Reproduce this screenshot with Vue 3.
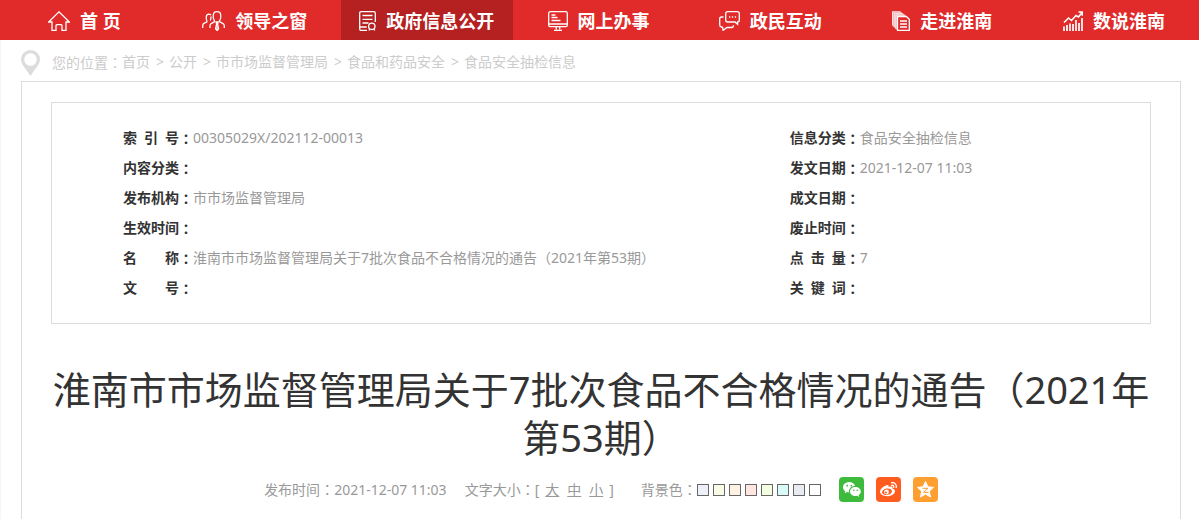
<script setup>
const navItems = [
  { label: '首 页', icon: 'home', w: 22 },
  { label: '领导之窗', icon: 'people', w: 23 },
  { label: '政府信息公开', icon: 'doc', w: 17, active: true },
  { label: '网上办事', icon: 'screen', w: 20 },
  { label: '政民互动', icon: 'chat', w: 21 },
  { label: '走进淮南', icon: 'papers', w: 18 },
  { label: '数说淮南', icon: 'chart', w: 20 },
]
const crumbs = ['首页', '公开', '市市场监督管理局', '食品和药品安全', '食品安全抽检信息']
const rows = [
  [['索', '引', '号'], '00305029X/202112-00013', [...'信息分类'], '食品安全抽检信息'],
  [[...'内容分类'], '', [...'发文日期'], '2021-12-07 11:03'],
  [[...'发布机构'], '市市场监督管理局', [...'成文日期'], ''],
  [[...'生效时间'], '', [...'废止时间'], ''],
  [['名', '称'], '淮南市市场监督管理局关于7批次食品不合格情况的通告（2021年第53期）', ['点', '击', '量'], '7'],
  [['文', '号'], '', ['关', '键', '词'], ''],
]
const sizes = ['大', '中', '小']
const swatches = ['#eef0f8', '#fafbe6', '#fff2e2', '#ffe6e1', '#f3ffe1', '#dafafa', '#e9ebf3', '#ffffff']
</script>

<template>
  <div class="page">
    <nav class="nav">
      <ul class="nav-list">
        <li v-for="n in navItems" :key="n.icon" class="nav-item" :class="{ active: n.active }">
          <a href="#">
            <svg :width="n.w" height="20" :viewBox="`0 0 ${n.w} 20`" class="nav-icon" aria-hidden="true">
              <g v-if="n.icon === 'home'">
                <path d="M.7 11 11 .9 21.3 11H18v8.3h-4v-4.6q0-1-1-1H9q-1 0-1 1v4.6H4V11z" />
              </g>
              <g v-else-if="n.icon === 'people'">
                <path d="M.7 17v-2q0-2 1.600-2.800L4.800 11V9.500C4.200 8.500 4.200 6.800 4.300 5.700 4.500 4 5.500 3.200 7 3.200q1.200 0 2 .7M8 17v-2.500q0-1.500 1.500-2.200l2.800-1.400V9.500C11 8 11 5.500 11.300 3.500 11.600 1.600 13 .7 15 .7s3.400.9 3.700 2.800c.3 2 .3 4.500-1 6v1.400l3 1.400q1.600.8 1.600 2.400V17M9 5.500C9 7.500 9 8.700 8.200 9.700" />
                <path d="M14 11h2.200l-.6 2 1 4.800-1.500 1.700-1.500-1.700 1-4.800z" fill="#fff" fill-opacity=".6" />
              </g>
              <g v-else-if="n.icon === 'doc'">
                <path d="M8 19.300H2.200Q.7 19.300.7 17.800V2.200Q.7.7 2.200.7h12.600q1.500 0 1.500 1.500V11M.7 16h7M3.500 4.500h10M3.500 8.300h10M3.500 12h6" />
                <circle cx="12.800" cy="15.300" r="3.200" /><path d="m10.800 18-1 1.500M14.800 18l1 1.500" />
              </g>
              <g v-else-if="n.icon === 'screen'">
                <rect x=".7" y=".7" width="18.600" height="15" rx="1.500" />
                <path d="M.7 13h18.600M3.500 4h4M3.500 6.500h6M3.500 9.500h9M8.300 16v2.500M11.700 16v2.500M6 19.300h8" />
              </g>
              <g v-else-if="n.icon === 'chat'">
                <path d="M8.700.7h9.600q2 0 2 2V9q0 2-1.700 2v2.300L16 11H8.700q-2 0-2-2V2.700q0-2 2-2z" />
                <path d="M4.500 6h-2Q.7 6 .7 8v5.500q0 2 1.500 2.500l1.400.3.500 3L8 16.500h4.500q2 0 2-2.300" />
                <path d="M10 6h1.300M12.900 6h1.300M15.800 6h1.300" />
              </g>
              <g v-else-if="n.icon === 'papers'">
                <path class="pale" d="M0 .5h8.500L12 3l3 2.500H5V19L0 14.500z" />
                <path class="thin" d="M.5 14V.7h8M2.200 16V2.400h8.300M3.800 18V4h8.700" />
                <path class="sheet" d="M5.500 5.500h8.800l3 2.800v11H5.500zM8 10h7M8 13h7M8 16h7" />
              </g>
              <g v-else>
                <path class="trend" d="m1 11.500 4.500-4.500 3 2.500L13 4.500l2.500 1.500 3.500-4.500M15.500 1h3.800v3.800" />
                <path class="bars" d="M1 20v-4.500M4 20v-6M7 20v-7.500M10 20v-7M13 20V9M16 20v-8M19 20V7" />
              </g>
            </svg>
            <span>{{ n.label }}</span>
          </a>
        </li>
      </ul>
    </nav>

    <main class="wrap">
      <div class="crumbs">
        <svg width="19" height="26" viewBox="0 0 19 26" class="pin" aria-hidden="true">
          <path fill-rule="evenodd" d="M9.500 0A9.500 9.500 0 0 0 0 9.500C0 14 4 17.500 9.500 26 15 17.500 19 14 19 9.500A9.500 9.500 0 0 0 9.500 0zm0 3.200a6.300 6.300 0 1 1 0 12.600 6.300 6.300 0 0 1 0-12.600z" />
        </svg>
        <span>您的位置<span class="colon">：</span></span>
        <template v-for="(c, i) in crumbs" :key="c">
          <span v-if="i" class="sep">&gt;</span><a href="#">{{ c }}</a>
        </template>
      </div>

      <article class="panel">
        <table class="info">
          <tbody>
            <tr v-for="(r, i) in rows" :key="i">
              <th scope="row"><span class="label"><span class="chars"><span v-for="(c, k) in r[0]" :key="k">{{ c }}</span></span><span class="colon">：</span></span></th>
              <td class="main-cell">{{ r[1] }}</td>
              <th scope="row"><span class="label"><span class="chars"><span v-for="(c, k) in r[2]" :key="k">{{ c }}</span></span><span class="colon">：</span></span></th>
              <td>{{ r[3] }}</td>
            </tr>
          </tbody>
        </table>

        <h1>淮南市市场监督管理局关于7批次食品不合格情况的通告（2021年第53期）</h1>

        <div class="meta">
          <span class="date">发布时间<span class="colon">：</span>2021-12-07 11:03</span>
          <span class="sizes">文字大小<span class="colon">：</span>[<span class="size-links"><a v-for="s in sizes" :key="s" href="#">{{ s }}</a></span>]</span>
          <span class="bg">背景色<span class="colon">：</span></span>
          <span class="swatches">
            <button v-for="s in swatches" :key="s" type="button" :aria-label="s" :style="{ backgroundColor: s }"></button>
          </span>
          <span class="share">
            <a href="#" class="wechat" aria-label="微信">
              <svg width="25" height="25" viewBox="0 0 25 25">
                <path fill="#fff" d="M10.300 5C6.700 5 4 7.300 4 10.200c0 1.700.9 3 2.300 4l-.5 2 2.200-1.200 2 .4c-.5-3.600 2.400-6.300 6.200-6.300C15.500 6.700 13.200 5 10.300 5z" />
                <path fill="#fff" d="M16.500 10c-3.200 0-5.500 2-5.500 4.600s2.400 4.500 5.500 4.500l1.700-.3 2 1.100-.5-1.700c1.300-.9 2.100-2.200 2.100-3.600 0-2.600-2.300-4.600-5.300-4.600z" />
                <g fill="#3ebb3c"><circle cx="8.200" cy="8.700" r=".9" /><circle cx="12.300" cy="8.700" r=".9" /><circle cx="14.800" cy="13.200" r=".8" /><circle cx="18.300" cy="13.200" r=".8" /></g>
              </svg>
            </a>
            <a href="#" class="weibo" aria-label="微博">
              <svg width="25" height="25" viewBox="0 0 25 25">
                <path fill="#fff" d="M10.500 8.200c1.400-.5 2.500 0 2 1.900 2.500-.9 4.500-.6 4 1.500 1.500.5 2.500 1.300 2.500 2.700 0 2.800-3.800 5-7.700 5-4 0-7.300-1.900-7.300-4.700 0-2.500 3.300-5.400 6.500-6.400z" />
                <ellipse cx="11" cy="14.700" rx="5" ry="3.200" fill="#ff5c1f" transform="rotate(-8 11 14.700)" />
                <circle cx="10.500" cy="15" r="2.400" fill="#fff" /><circle cx="9.900" cy="15.400" r="1" fill="#ff5c1f" />
                <path fill="none" stroke="#fff" stroke-width="1.300" stroke-linecap="round" d="M15.500 5.700c3.200-.6 5.500 2 4.700 5M15.700 8.300c1.500-.2 2.300.8 2 2" />
              </svg>
            </a>
            <a href="#" class="qzone" aria-label="QQ空间">
              <svg width="25" height="25" viewBox="0 0 25 25">
                <path fill="#fff" stroke="#fff" stroke-linejoin="round" d="m12.500 4.500 2.400 5.300 5.600.6-4.200 3.900 1.200 5.700-5-2.900-5 2.900 1.200-5.700-4.200-3.900 5.600-.6z" />
                <path fill="none" stroke="#ff9f32" d="M9.500 11.300h5.500l-4.500 4q2.500.5 5 0" />
              </svg>
            </a>
          </span>
        </div>
      </article>
    </main>
  </div>
</template>

<style>
body { margin: 0; background: #fff; }
</style>

<style scoped>
.page {
  font: 14px/30px "Noto Sans", "Noto Sans CJK SC", sans-serif;
  color: #999;
  overflow: hidden;
}
a { color: inherit; text-decoration: none; }
.colon { font-family: "Noto Sans CJK TC", sans-serif; }
.nav { background: #e12a2a; }
.nav-list { display: flex; list-style: none; margin: 0 -1px 0 0; padding: 0; }
.nav-item { flex: 172 1 0; }
.nav-item:first-child { flex-grow: 169; }
.nav-item.active { background: #b52020; }
.nav-item a {
  display: flex;
  align-items: center;
  justify-content: center;
  gap: 10px;
  height: 40px;
  padding-top: 2px;
  box-sizing: border-box;
  color: #fff;
  font-size: 18px;
  font-weight: 700;
  white-space: nowrap;
}
.nav-icon { fill: none; stroke: #fff; stroke-width: 1.3; flex: none; }
.nav-icon .pale { fill: #fff; fill-opacity: .6; stroke: none; }
.nav-icon .thin { stroke-width: 1; stroke-opacity: .7; }
.nav-icon .sheet { fill: #e12a2a; }
.nav-icon .trend { stroke-width: 1.6; }
.nav-icon .bars { stroke-width: 2; opacity: .85; }
.wrap { border-left: 1px solid #f5f5f5; padding: 0 18px 0 20px; }
.crumbs { display: flex; align-items: center; height: 41px; color: #ccc; white-space: nowrap; }
.pin { fill: #dcdcdc; margin: 5px 12px 0 0; }
.crumbs > span, .crumbs > a { padding-top: 3px; }
.crumbs .sep { padding-left: 6px; padding-right: 5px; }
.panel { border: 1px solid #dcdcdc; padding: 20px 29px 30px; }
.info {
  width: 100%;
  border-collapse: separate;
  border-spacing: 0;
  border: 1px solid #dcdcdc;
  padding: 20px 70px;
}
.info th, .info td { padding: 0; text-align: left; height: 30px; white-space: nowrap; }
.info th { width: 70px; padding-left: 1px; color: #333; }
.info td { width: 23%; }
.info .main-cell { width: auto; }
.label { display: flex; }
.chars { display: flex; justify-content: space-between; width: 56px; }
h1 { margin: 41px 0 0; font-size: 38px; line-height: 48px; font-weight: 400; color: #333; text-align: center; }
.meta { display: flex; align-items: center; justify-content: center; margin-top: 13px; white-space: nowrap; }
.date { margin-right: 18px; }
.sizes { margin-right: 27px; }
.size-links { margin: 0 2px; }
.sizes a { margin: 0 4px; text-decoration: underline; }
.swatches { display: flex; gap: 4px; margin-right: 18px; }
.swatches button { width: 12px; height: 12px; padding: 0; border: 1px solid #666; border-radius: 0; }
.share { display: flex; gap: 12px; }
.share a { width: 25px; height: 25px; border-radius: 4px; }
.share svg { display: block; }
.wechat { background: #3ebb3c; }
.weibo { background: #ff5c1f; }
.qzone { background: #ff9f32; }
</style>
